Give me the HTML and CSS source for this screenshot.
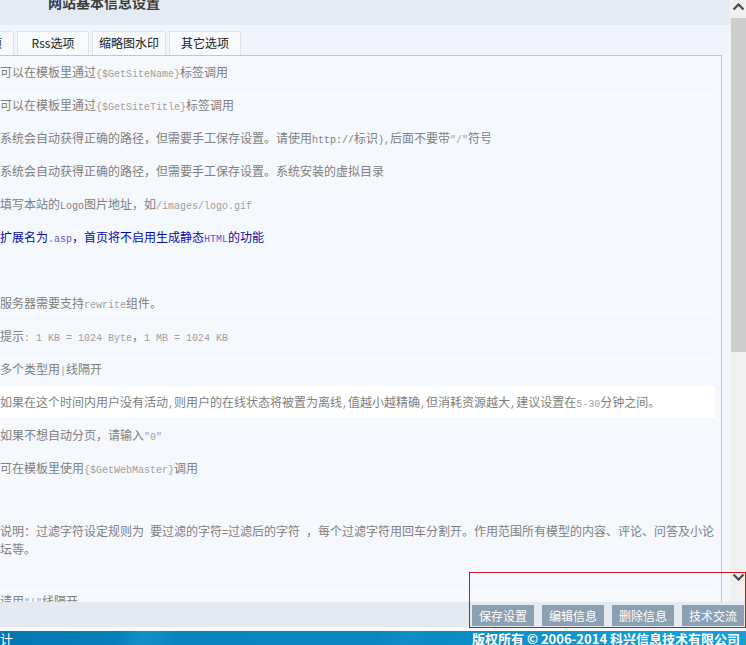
FILE: index.html
```html
<!DOCTYPE html>
<html lang="zh-CN">
<head>
<meta charset="utf-8">
<title>网站基本信息设置</title>
<link rel="stylesheet" href="styles.css">
</head>
<body>
<div class="frame">
  <div class="main">
    <div class="head"><h1 class="title">网站基本信息设置</h1></div>
    <div class="tabs">
      <span class="tab tab-cut">基本选项</span>
      <span class="tab">Rss选项</span>
      <span class="tab">缩略图水印</span>
      <span class="tab">其它选项</span>
    </div>
    <div class="box">
      <div class="row">可以在模板里通过<span class="c">{$GetSiteName}</span>标签调用</div>
      <div class="row">可以在模板里通过<span class="c">{$GetSiteTitle}</span>标签调用</div>
      <div class="row">系统会自动获得正确的路径，但需要手工保存设置。请使用<span class="a">http://</span>标识<span class="a">),</span>后面不要带<span class="c">"/"</span>符号</div>
      <div class="row">系统会自动获得正确的路径，但需要手工保存设置。系统安装的虚拟目录</div>
      <div class="row">填写本站的<span class="a">Logo</span>图片地址，如<span class="c">/images/logo.gif</span></div>
      <div class="row blue">扩展名为<span class="c">.asp</span>，首页将不启用生成静态<span class="c">HTML</span>的功能</div>
      <div class="row"></div>
      <div class="row">服务器需要支持<span class="c">rewrite</span>组件。</div>
      <div class="row">提示<span class="c">: 1 KB = 1024 Byte</span>，<span class="c">1 MB = 1024 KB</span></div>
      <div class="row">多个类型用<span class="c">|</span>线隔开</div>
      <div class="row hl">如果在这个时间内用户没有活动<span class="a">,</span>则用户的在线状态将被置为离线<span class="a">,</span>值越小越精确<span class="a">,</span>但消耗资源越大<span class="a">,</span>建议设置在<span class="c">5-30</span>分钟之间。</div>
      <div class="row">如果不想自动分页，请输入<span class="c">"0"</span></div>
      <div class="row">可在模板里使用<span class="c">{$GetWebMaster}</span>调用</div>
      <div class="row"></div>
      <div class="row tall">说明：过滤字符设定规则为<span class="a"> </span>要过滤的字符<span class="a">=</span>过滤后的字符<span class="a"> </span>，每个过滤字符用回车分割开。作用范围所有模型的内容、评论、问答及小论坛等。</div>
      <div class="row">请用<span class="c">"|"</span>线隔开</div>
    </div>
  </div>
  <div class="scrollbar">
    <div class="sb-btn"><svg width="16" height="17" viewBox="0 0 16 17"><polyline points="3.5,9.5 8.5,4.5 13.5,9.5" fill="none" stroke="#505050" stroke-width="2.4"/></svg></div>
    <div class="sb-thumb"></div>
    <div class="sb-track"></div>
    <div class="sb-btn"><svg width="16" height="17" viewBox="0 0 16 17"><polyline points="3.5,6.5 8.5,11.5 13.5,6.5" fill="none" stroke="#505050" stroke-width="2.4"/></svg></div>
    <div class="sb-corner"></div>
  </div>
</div>
<div class="actions">
  <button class="btn" type="button">保存设置</button>
  <button class="btn" type="button">编辑信息</button>
  <button class="btn" type="button">删除信息</button>
  <button class="btn" type="button">技术交流</button>
</div>
<div class="strip"></div>
<div class="footer"><span class="design">计</span><span class="copy">版权所有 © 2006-2014 科兴信息技术有限公司</span></div>
<div class="highlight"></div>
</body>
</html>
```

FILE: styles.css
```css
html, body {
  margin: 0;
  padding: 0;
  overflow: hidden;
}
body {
  width: 746px;
  height: 645px;
  position: relative;
  font-family: "Noto Sans CJK SC", sans-serif;
  font-size: 12px;
  color: #808080;
  background: #fff;
}
.frame {
  display: flex;
  height: 602px;
  overflow: hidden;
}
.main {
  width: 730px;
  flex: none;
  display: flex;
  flex-direction: column;
  background: #f3f6fb;
}
.head {
  height: 25px;
  flex: none;
  background: #e4ebf3;
  padding-left: 48px;
  overflow: hidden;
}
.title {
  margin: -5px 0 0;
  font-size: 14px;
  line-height: 14px;
  font-weight: 700;
  color: #3c3c3c;
}
.tabs {
  height: 30px;
  flex: none;
  background: #f1f5fa;
  display: flex;
  align-items: flex-end;
  gap: 3px;
  overflow: hidden;
}
.tab {
  box-sizing: border-box;
  flex: none;
  min-width: 72px;
  height: 24px;
  padding: 0 6px;
  border: 1px solid #dde3ea;
  border-bottom: 0;
  background: #f7f9fc;
  color: #222;
  line-height: 21px;
  text-align: center;
  white-space: nowrap;
}
.tab-cut {
  margin-left: -58px;
}
.box {
  flex: 1;
  width: 715px;
  padding-right: 6px;
  border-top: 1px solid #c6c6c6;
  border-right: 1px solid #c6c6c6;
  background: #f5f8fd;
  overflow: hidden;
}
.row {
  box-sizing: border-box;
  height: 33px;
  line-height: 32px;
  border-bottom: 1px solid #f1f4fa;
  white-space: nowrap;
  overflow: hidden;
}
.row.hl {
  background: #fff;
}
.row.blue {
  color: #0a0aa6;
}
.row.blue .c {
  color: #5c5cd0;
}
.row.tall {
  height: 67px;
  line-height: 15px;
  padding-top: 5px;
  white-space: normal;
}
.c {
  font-family: "Liberation Mono", monospace;
  font-size: 10px;
  color: #a0a0a0;
}
.a {
  font-family: "Liberation Mono", monospace;
  font-size: 10px;
}
.scrollbar {
  width: 16px;
  flex: none;
  display: flex;
  flex-direction: column;
  background: #f0f0f0;
}
.sb-btn {
  height: 17px;
  flex: none;
  display: flex;
}
.sb-thumb {
  height: 334px;
  flex: none;
  margin: 1px 0 0 1px;
  background: #cdcdcd;
}
.sb-track {
  flex: 1;
}
.sb-corner {
  height: 17px;
  flex: none;
}
.actions {
  box-sizing: border-box;
  height: 25px;
  padding: 3px 2px 0 0;
  background: #e4eaf0;
  display: flex;
  justify-content: flex-end;
  gap: 8px;
}
.btn {
  height: 21px;
  padding: 0 7px;
  margin: 0;
  border: 0;
  background: #8ca0b3;
  color: #fff;
  font-family: "Noto Sans CJK SC", sans-serif;
  font-size: 12px;
  line-height: 21px;
}
.strip {
  height: 4px;
  background: #fafbfd;
}
.footer {
  height: 30px;
  display: flex;
  justify-content: space-between;
  padding-right: 6px;
  color: #fff;
  font-size: 13px;
  line-height: 16px;
  background: linear-gradient(110deg, #0477b2 0%, #077fb9 16%, #1590c7 19%, #0b84bd 24%, #0a86bf 50%, #0f8ec8 54%, #0b8bc4 58%, #1398d1 80%, #16a0d8 100%);
}
.copy {
  font-weight: 700;
}
.highlight {
  position: absolute;
  left: 469px;
  top: 572px;
  width: 275px;
  height: 54px;
  border: 1px solid #c8161e;
}
```
